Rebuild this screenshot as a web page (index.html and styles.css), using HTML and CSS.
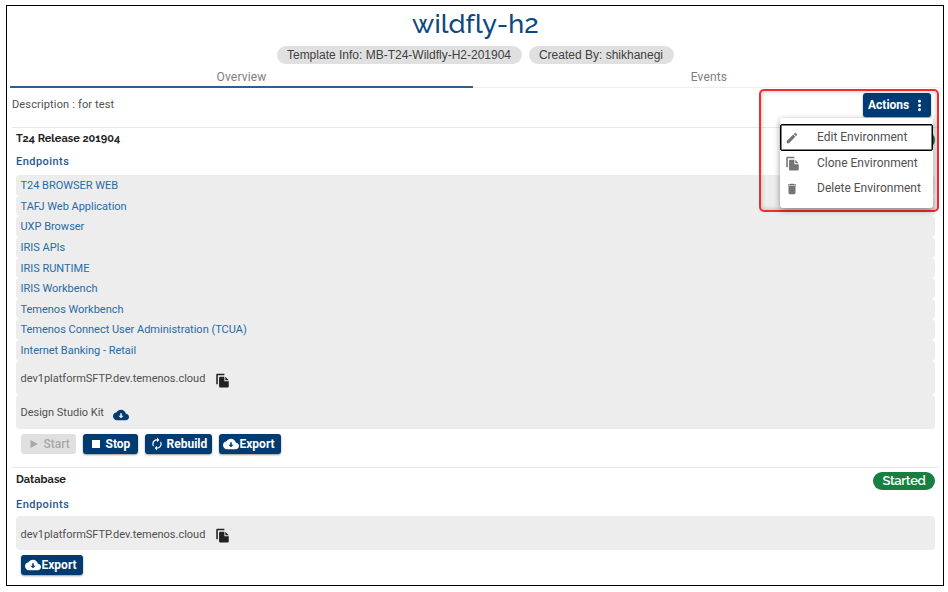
FILE: index.html
```html
<!DOCTYPE html>
<html lang="en">
<head>
<meta charset="utf-8">
<title>wildfly-h2</title>
<link rel="stylesheet" href="styles.css">
</head>
<body>
<svg class="sprite" aria-hidden="true">
  <symbol id="copy" viewBox="0 0 24 24"><path d="M15 1H4c-1.100 0-2 .9-2 2v15h2.500V3.500H15V1z"/><path d="M15 6H8.500c-1.100 0-2 .9-2 2v13c0 1.100.9 2 2 2H20c1.100 0 2-.9 2-2v-8h-7V6z"/><path d="M16.500 6v5.500H22z"/></symbol>
  <symbol id="cloud" viewBox="0 0 24 24"><path fill-rule="evenodd" d="M19.350 10.040C18.670 6.590 15.640 4 12 4 9.110 4 6.600 5.640 5.350 8.040 2.340 8.360 0 10.910 0 14c0 3.310 2.690 6 6 6h13c2.760 0 5-2.240 5-5 0-2.640-2.050-4.780-4.650-4.960zM16 13l-4 4-4-4h2.800V9.500h2.400V13z"/></symbol>
  <symbol id="edit" viewBox="0 0 24 24"><path d="M3 17.250V21h3.750L17.810 9.940l-3.750-3.750L3 17.250zM20.710 7.040c.39-.39.39-1.020 0-1.410l-2.340-2.340c-.39-.39-1.020-.39-1.410 0l-1.830 1.830 3.750 3.750 1.830-1.830z"/></symbol>
  <symbol id="trash" viewBox="0 0 24 24"><path d="M6 19c0 1.100.9 2 2 2h8c1.100 0 2-.9 2-2V7H6v12zM19 4h-3.500l-1-1h-5l-1 1H5v2h14V4z"/></symbol>
  <symbol id="play" viewBox="0 0 24 24"><path d="M5 4v16l15-8z"/></symbol>
  <symbol id="stop" viewBox="0 0 24 24"><path d="M4 4h16v16H4z"/></symbol>
  <symbol id="sync" viewBox="0 0 24 24"><path d="M12 6v3l4-4-4-4v3c-4.420 0-8 3.580-8 8 0 1.570.46 3.030 1.240 4.260L6.700 14.800c-.45-.83-.7-1.790-.7-2.800 0-3.310 2.690-6 6-6zm6.760 1.740L17.300 9.200c.44.84.7 1.790.7 2.800 0 3.310-2.690 6-6 6v-3l-4 4 4 4v-3c4.420 0 8-3.580 8-8 0-1.570-.46-3.030-1.240-4.260z"/></symbol>
  <symbol id="more" viewBox="0 0 24 24"><circle cx="12" cy="4" r="2.700"/><circle cx="12" cy="12" r="2.700"/><circle cx="12" cy="20" r="2.700"/></symbol>
</svg>
<main class="frame">
  <h1 class="title">wildfly-h2</h1>
  <div class="chips"><span class="chip template">Template Info: MB-T24-Wildfly-H2-201904</span><span class="chip creator">Created By: shikhanegi</span></div>
  <nav class="tabs"><span class="tab active">Overview</span><span class="tab">Events</span></nav>
  <div class="description">
    <span>Description : for test</span>
    <div class="actions">
      <button class="btn actions-btn">Actions <svg class="more"><use href="#more"/></svg></button>
      <div class="highlight"></div>
      <div class="menu">
        <div class="item focused"><svg><use href="#edit"/></svg><span>Edit Environment</span></div>
        <div class="item"><svg class="big"><use href="#copy"/></svg><span>Clone Environment</span></div>
        <div class="item"><svg><use href="#trash"/></svg><span>Delete Environment</span></div>
      </div>
    </div>
  </div>
  <section class="component release">
    <header class="head"><h2>T24 Release 201904</h2><span class="status"></span></header>
    <h3>Endpoints</h3>
    <ul class="list">
      <li><a>T24 BROWSER WEB</a></li>
      <li><a>TAFJ Web Application</a></li>
      <li><a>UXP Browser</a></li>
      <li><a>IRIS APIs</a></li>
      <li><a>IRIS RUNTIME</a></li>
      <li><a>IRIS Workbench</a></li>
      <li><a>Temenos Workbench</a></li>
      <li><a>Temenos Connect User Administration (TCUA)</a></li>
      <li><a>Internet Banking - Retail</a></li>
      <li class="tall"><span>dev1platformSFTP.dev.temenos.cloud</span><svg class="copy"><use href="#copy"/></svg></li>
      <li class="tall"><span>Design Studio Kit</span><svg class="cloud"><use href="#cloud"/></svg></li>
    </ul>
    <div class="buttons">
      <button class="btn start" disabled><svg><use href="#play"/></svg>Start</button>
      <button class="btn stop"><svg><use href="#stop"/></svg>Stop</button>
      <button class="btn rebuild"><svg><use href="#sync"/></svg>Rebuild</button>
      <button class="btn export"><svg><use href="#cloud"/></svg>Export</button>
    </div>
  </section>
  <section class="component database">
    <header class="head"><h2>Database</h2><span class="status">Started</span></header>
    <h3>Endpoints</h3>
    <ul class="list">
      <li class="tall"><span>dev1platformSFTP.dev.temenos.cloud</span><svg class="copy"><use href="#copy"/></svg></li>
    </ul>
    <div class="buttons"><button class="btn export"><svg><use href="#cloud"/></svg>Export</button></div>
  </section>
</main>
</body>
</html>
```
FILE: styles.css
```css
* { box-sizing: border-box; }
body { margin: 0; padding: 5px 0 0 6px; background: #fff; font-family: Roboto, sans-serif; font-size: 11px; color: #505050; white-space: nowrap; }
h1, h2, h3, ul { margin: 0; padding: 0; }
svg { fill: currentColor; flex: none; }
.sprite { position: absolute; width: 0; height: 0; }
.frame { width: 938px; height: 581px; border: 1px solid #000; padding: 0 3px 0 3px; }
.title { height: 40px; padding-left: 1px; text-align: center; font: 500 27px/35px Raleway, Lato, sans-serif; letter-spacing: .1px; color: #0d4880; }
.chips { display: flex; justify-content: center; gap: 7px; height: 18px; }
.chip { height: 18px; border-radius: 9px; background: #e0e0e0; text-align: center; font: 12px/18px "Liberation Sans", sans-serif; color: #414141; }
.template { width: 245px; }
.creator { width: 145px; }
.tabs { display: flex; height: 24px; border-bottom: 1px solid #eee; }
.tab { width: 463px; height: 24px; line-height: 26px; text-align: center; font-size: 12px; letter-spacing: .15px; color: #7d7d7d; }
.tab + .tab { padding-left: 9px; }
.tab.active { border-bottom: 2px solid #2b5f93; }
.description { display: flex; justify-content: space-between; height: 39px; padding: 5px 9px 0 2px; line-height: 23px; letter-spacing: .15px; }
.actions { position: relative; height: 24px; }
.btn { display: flex; align-items: center; height: 20px; padding: 0 5px; border: 0; border-radius: 3px; background: #003c71; color: #fff; font: 700 12px/20px Roboto, sans-serif; box-shadow: 0 1px 2px #0006; }
.btn svg { width: 16px; height: 16px; }
.actions-btn { width: 68px; height: 24px; justify-content: space-between; }
.actions-btn .more { width: 13px; height: 13px; }
.highlight { position: absolute; top: -4px; right: -8px; width: 180px; height: 123px; border: 2px solid #f52a2c; border-radius: 5px; box-shadow: inset 0 0 5px #0004; z-index: 1; }
.menu { position: absolute; top: 25px; right: -2px; width: 153px; height: 90px; padding-top: 6px; border-radius: 3px; background: #fff; box-shadow: 0 2px 6px #0006; z-index: 2; }
.item { display: flex; align-items: center; height: 25px; padding-left: 5px; font-size: 12px; line-height: 20px; letter-spacing: 0; }
.item span { padding-bottom: 2px; }
.item svg { width: 14px; height: 14px; margin-right: 18px; color: #757575; }
.item svg.big { width: 15px; height: 15px; margin-right: 17px; }
.item.focused { height: 27px; padding-left: 4px; border: 1px solid #000; border-radius: 2px; box-shadow: inset 0 0 0 .5px #000; }
.component { margin-left: 2px; margin-right: 1px; padding: 0 4px; border-top: 1px solid #e8e8e8; }
.release { height: 340px; }
.head { display: flex; justify-content: space-between; align-items: flex-start; height: 24px; padding-top: 4px; }
.release .head { height: 23px; padding-top: 3px; }
h2 { font: 700 11px/15px Raleway, Lato, sans-serif; color: #222; letter-spacing: 0; }
h3 { height: 24px; font: 500 11px/22px Roboto, sans-serif; letter-spacing: .45px; color: #1f588f; }
.database h3 { line-height: 23px; padding-top: 1px; }
.status { width: 62px; height: 18px; border-radius: 9px; background: #178040; color: #fff; text-align: center; font: 600 13px/17px Raleway, Lato, sans-serif; letter-spacing: -.35px; }
.list { list-style: none; }
.list li { display: flex; height: 20.650px; line-height: 22px; padding-left: 4.500px; background: #ededed; border-radius: 4px; letter-spacing: -.01px; }
.list a { color: #286ba5; }
.list .tall { height: 34px; line-height: 36px; }
.copy { width: 15px; height: 15px; margin: 12px 0 0 9.500px; color: #222; }
.cloud { width: 16px; height: 16px; margin: 12px 0 0 9px; color: #003c71; }
.buttons { display: flex; gap: 7px; padding: 5px 0 0 4.500px; }
.start { width: 55px; background: #e0e0e0; color: #a8a8a8; box-shadow: none; font-weight: 500; }
.stop { width: 55px; }
.rebuild { width: 67px; }
.export { width: 62px; }
.start svg, .stop svg { width: 12px; height: 12px; margin: 0 4px 0 2px; }
.rebuild svg { width: 14px; height: 14px; margin-right: 3px; }
.export svg { margin-right: 1px; }
.btn.export { padding: 0 4px; }
.database .tall { line-height: 37px; }
```
